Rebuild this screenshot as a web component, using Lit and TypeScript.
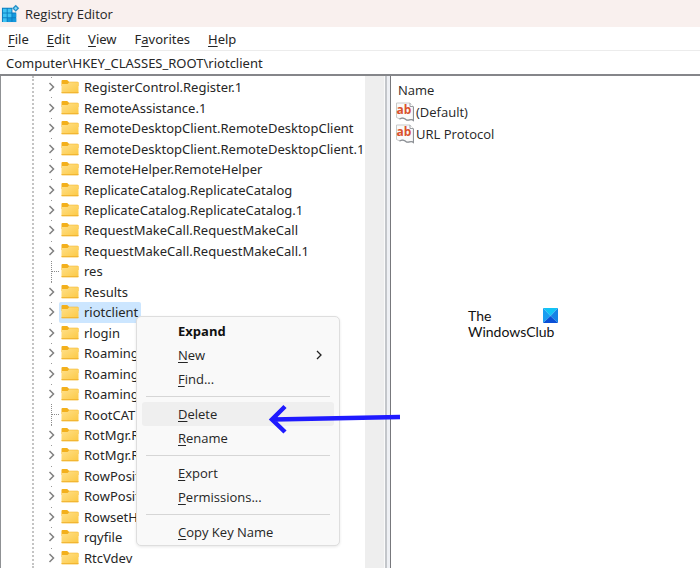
import { LitElement, html, css, svg, nothing } from "lit";
import { customElement, state } from "lit/decorators.js";
import { classMap } from "lit/directives/class-map.js";

interface Key {
  name: string;
  leaf?: boolean;
}

interface Command {
  label: string;
  mnemonic?: boolean;
  submenu?: boolean;
  divider?: boolean;
}

const KEYS: Key[] = [
  { name: "RegisterControl.Register.1" },
  { name: "RemoteAssistance.1" },
  { name: "RemoteDesktopClient.RemoteDesktopClient" },
  { name: "RemoteDesktopClient.RemoteDesktopClient.1" },
  { name: "RemoteHelper.RemoteHelper" },
  { name: "ReplicateCatalog.ReplicateCatalog" },
  { name: "ReplicateCatalog.ReplicateCatalog.1" },
  { name: "RequestMakeCall.RequestMakeCall" },
  { name: "RequestMakeCall.RequestMakeCall.1" },
  { name: "res", leaf: true },
  { name: "Results" },
  { name: "riotclient" },
  { name: "rlogin" },
  { name: "Roaming" },
  { name: "Roaming" },
  { name: "Roaming" },
  { name: "RootCAT", leaf: true },
  { name: "RotMgr.R" },
  { name: "RotMgr.R" },
  { name: "RowPosit" },
  { name: "RowPosit" },
  { name: "RowsetH" },
  { name: "rqyfile" },
  { name: "RtcVdev" },
];

const COMMANDS: Command[] = [
  { label: "Expand" },
  { label: "New", mnemonic: true, submenu: true },
  { label: "Find...", mnemonic: true },
  { label: "Delete", mnemonic: true, divider: true },
  { label: "Rename", mnemonic: true },
  { label: "Export", mnemonic: true, divider: true },
  { label: "Permissions...", mnemonic: true },
  { label: "Copy Key Name", mnemonic: true, divider: true },
];

const folderIcon = html`<svg class="folder" viewBox="0 0 18 16" aria-hidden="true">
  <defs>
    <linearGradient id="f" x1="0" y1="0" x2="1" y2="1">
      <stop offset="0" stop-color="#ffe08a" />
      <stop offset="1" stop-color="#fcc944" />
    </linearGradient>
  </defs>
  <path d="M.5 2Q.5 1 1.500 1H6.200L8 2.700H16.500Q17.500 2.700 17.500 3.700V7H.5Z" fill="#f3b01c" />
  <path d="M.5 5H6.600L8.200 3.200H17.500V13.400Q17.500 14.200 16.700 14.200H1.300Q.5 14.200 .5 13.400Z" fill="url(#f)" />
  <path d="M.5 13.700H17.500" stroke="#efb02c" />
</svg>`;

const valueIcon = html`<svg class="value-icon" viewBox="0 0 18 20" aria-hidden="true">
  <path d="M.5 1H14L17.500 4.500V18.500C15 16 13 19 10.500 18C8 15.500 6 15.500 4 17L.5 15.500Z" fill="#fafafa" stroke="#c9c9c9" />
  <path d="M17.500 5V18.500C15 16 13 19 10.500 18C8 15.500 6 15.500 3.500 17" fill="none" stroke="#8d9196" stroke-width="1.200" />
  <path d="M14 1V4.500H17.500" fill="#fff" stroke="#9a9da1" />
  <text x="8" y="12" text-anchor="middle">ab</text>
</svg>`;

const appIcon = html`<svg class="app-icon" viewBox="0 0 20 20" aria-hidden="true">
  <path d="M1 4H12V9H16V19H1Z" fill="#0b7cc0" />
  ${[0, 1, 2].map((r) =>
    [0, 1, 2].map((c) =>
      r === 0 && c === 2
        ? nothing
        : svg`<rect x=${2 + c * 5} y=${5 + r * 5} width="4" height="4" fill=${r + c > 2 ? "#1599dd" : "#3fc3f3"} />`,
    ),
  )}
  <path d="M15.500 .8L19.200 4.500L15.500 8.200L11.800 4.500Z" fill="#2790c8" />
  <path d="M15.500 2.800L17.200 4.500L15.500 6.200L13.800 4.500Z" fill="#8adcfa" />
</svg>`;

@customElement("app-root")
export class AppRoot extends LitElement {
  @state() private selected = 11;
  @state() private highlighted = "Delete";

  static styles = css`
    :host {
      display: flex;
      flex-direction: column;
      position: relative;
      min-height: 100vh;
      overflow: hidden;
      background: #fff;
      color: #262626;
      font: 13px/20px "Open Sans", "Noto Sans", sans-serif;
    }
    * { box-sizing: border-box; }
    button, input {
      font: inherit;
      color: inherit;
      background: none;
      border: 0;
      padding: 0;
      margin: 0;
      text-align: left;
    }
    u { text-underline-offset: 2px; text-decoration-thickness: 1px; }
    h1, ul { margin: 0; padding: 0; list-style: none; }

    .title {
      display: flex;
      align-items: center;
      gap: 5px;
      height: 27px;
      padding-left: 1px;
      background: #f9f0ee;
    }
    .title h1 { font: inherit; }
    .app-icon { width: 19px; height: 19px; }

    .menubar {
      display: flex;
      align-items: center;
      gap: 18px;
      height: 23px;
      padding-left: 8px;
      font-family: "Noto Sans", sans-serif;
    }
    .address {
      height: 26px;
      padding: 0 6px;
      border-top: 1px solid #ececec;
      border-bottom: 2px solid #85868a;
      font-family: "Noto Sans", sans-serif;
      outline: 0;
    }

    .panes { display: flex; flex: 1; }
    .tree-pane {
      display: flex;
      flex: 0 0 55%;
      min-width: 0;
      border-left: 1px solid #8f9194;
    }
    .guide {
      flex: none;
      width: 16px;
      margin-left: 31px;
      border-left: 2px dotted #c4c4c4;
    }
    .tree {
      display: grid;
      grid-auto-rows: 1fr;
      flex: 1;
      min-width: 0;
      padding-top: 1px;
      overflow: hidden;
      font-family: "Noto Sans", sans-serif;
    }
    .key { display: flex; min-width: 0; }
    .twisty {
      flex: none;
      display: grid;
      place-items: center;
      width: 7px;
      background: linear-gradient(#9a9a9a, #9a9a9a) center top / 1px 1px no-repeat;
    }
    .twisty svg { width: 7px; height: 10px; }
    .branch {
      flex: none;
      align-self: stretch;
      width: 9px;
      margin-left: 3px;
      margin-right: -5px;
      border-left: 1px dotted #8c8c8c;
      background: repeating-linear-gradient(90deg, #8c8c8c 0 1px, transparent 1px 2px) 0 50% / 100% 1px no-repeat;
    }
    .node {
      display: flex;
      align-items: center;
      gap: 5px;
      margin-left: 4px;
      padding: 0 3px 0 2px;
      border-radius: 2px;
      white-space: nowrap;
    }
    .node.selected { background: #cce6ff; }
    .folder { flex: none; width: 18px; height: 16px; }
    .scrollbar { flex: none; width: 20px; border-right: 1px solid #fafafa; background: #eee; }

    .splitter {
      flex: none;
      width: 6px;
      border-left: 2px solid #c3c6ca;
      border-right: 1px solid #77787c;
      background: #eef0f4;
    }

    .value-pane { flex: 1; min-width: 0; padding: 2px 5px; }
    table { border-collapse: collapse; }
    th { padding: 0 2px; text-align: left; font-weight: 400; height: 23px; }
    td { padding: 0; height: 22px; }
    .value { display: flex; align-items: center; gap: 2px; }
    .value-icon { width: 18px; height: 20px; }
    .value-icon text { font: 700 12px "Open Sans", sans-serif; fill: #d9512c; }

    .context {
      position: absolute;
      left: 136px;
      top: 316px;
      width: 204px;
      padding: 2px 5px 1px;
      border: 1px solid #dedede;
      border-radius: 5px;
      background: #f9f9f9;
      box-shadow: 0 1px 3px #00000018;
    }
    .command {
      display: flex;
      align-items: center;
      justify-content: space-between;
      width: 100%;
      height: 24px;
      padding: 0 12px 0 36px;
      border-radius: 3px;
    }
    .command.active { background: #efefef; }
    .command.default { font-weight: 700; color: #111; }
    .command svg { width: 6px; height: 10px; }
    .divider { height: 1px; margin: 5px 4px; background: #d6d6d6; }

    .pointer {
      position: absolute;
      left: 268px;
      top: 403px;
      width: 133px;
      height: 32px;
      pointer-events: none;
    }
    .brand {
      position: absolute;
      left: 468px;
      top: 308px;
      width: 90px;
      color: #111;
      font: 14px/16px Lato, sans-serif;
      white-space: nowrap;
    }
    .brand-top { display: flex; justify-content: space-between; }
    .brand svg { width: 15px; height: 15px; }
  `;

  private renderKey(key: Key, index: number) {
    const selected = index === this.selected;
    return html`<li class="key" role="treeitem" aria-selected=${selected}>
      ${key.leaf
        ? html`<span class="branch"></span>`
        : html`<button class="twisty" aria-label="Expand ${key.name}">
            <svg viewBox="0 0 7 10"><path d="M1.500 1L5.500 5L1.500 9" fill="none" stroke="#808080" stroke-width="1.500" /></svg>
          </button>`}
      <button class=${classMap({ node: true, selected })} @click=${() => (this.selected = index)}>
        ${folderIcon}<span>${key.name}</span>
      </button>
    </li>`;
  }

  private renderCommand(c: Command) {
    return html`${c.divider ? html`<div class="divider" role="separator"></div>` : nothing}
      <button
        role="menuitem"
        class=${classMap({ command: true, active: c.label === this.highlighted, default: !c.mnemonic })}
        @mouseenter=${() => (this.highlighted = c.label)}
      >
        <span>${c.mnemonic ? html`<u>${c.label[0]}</u>${c.label.slice(1)}` : c.label}</span>
        ${c.submenu
          ? html`<svg viewBox="0 0 6 10"><path d="M1 1L5 5L1 9" fill="none" stroke="#222" stroke-width="1.300" /></svg>`
          : nothing}
      </button>`;
  }

  render() {
    return html`
      <header class="title">${appIcon}<h1>Registry Editor</h1></header>
      <nav class="menubar">
        <button><u>F</u>ile</button>
        <button><u>E</u>dit</button>
        <button><u>V</u>iew</button>
        <button>F<u>a</u>vorites</button>
        <button><u>H</u>elp</button>
      </nav>
      <input class="address" aria-label="Address" .value=${"Computer\\HKEY_CLASSES_ROOT\\riotclient"} />
      <main class="panes">
        <section class="tree-pane">
          <span class="guide"></span>
          <ul class="tree" role="tree">${KEYS.map((k, i) => this.renderKey(k, i))}</ul>
          <div class="scrollbar"></div>
        </section>
        <div class="splitter"></div>
        <section class="value-pane">
          <table>
            <thead><tr><th scope="col">Name</th></tr></thead>
            <tbody>
              ${["(Default)", "URL Protocol"].map(
                (v) => html`<tr><td><span class="value">${valueIcon}<span>${v}</span></span></td></tr>`,
              )}
            </tbody>
          </table>
        </section>
      </main>
      <div class="brand">
        <div class="brand-top">
          <span>The</span>
          <svg viewBox="0 0 15 15" aria-hidden="true">
            <path d="M0 0H15L7.500 8Z" fill="#12c3f5" />
            <path d="M0 0L7.500 8L0 15Z" fill="#1a9df0" />
            <path d="M15 0V15L7.500 8Z" fill="#1583e6" />
            <path d="M0 15L7.500 8L15 15Z" fill="#0a4fd6" />
          </svg>
        </div>
        <div>WindowsClub</div>
      </div>
      <div class="context" role="menu">${COMMANDS.map((c) => this.renderCommand(c))}</div>
      <svg class="pointer" viewBox="0 0 133 32" aria-hidden="true">
        <path d="M132 14L5 16.500M17 3.500L4 16.500L17 29" fill="none" stroke="#1f1aff" stroke-width="4.500" />
      </svg>
    `;
  }
}
